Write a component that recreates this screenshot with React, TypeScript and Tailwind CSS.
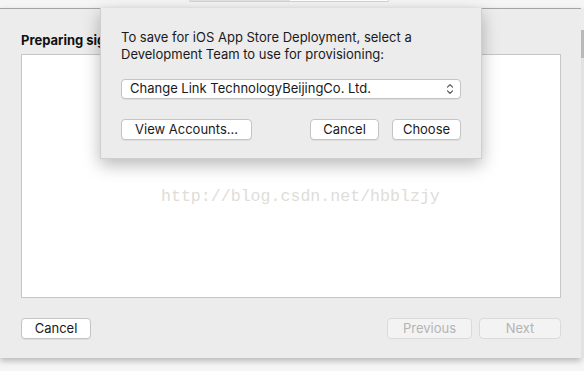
import React from 'react'

const sans = { fontFamily: 'Inter, "Liberation Sans", Arial, sans-serif' }

function MacButton({ label, width, disabled }: { label: string; width: string; disabled?: boolean }) {
  return (
    <button
      className={
        'h-[21px] rounded-[4px] border text-[13px] leading-none ' +
        width +
        (disabled
          ? ' border-[#dadada] bg-[#f3f3f3] text-[#b3b3b3]'
          : ' border-[#c4c4c4] bg-white text-[#1a1a1a] shadow-[0_1px_0_rgba(0,0,0,0.06)]')
      }
    >
      {label}
    </button>
  )
}

function Chevrons() {
  return (
    <svg width="8" height="12" viewBox="0 0 8 12" fill="none" stroke="#4a4a4a" strokeWidth="1.1" strokeLinecap="round" strokeLinejoin="round">
      <path d="M1.5 4.2 L4 1.7 L6.5 4.2" />
      <path d="M1.5 7.8 L4 10.3 L6.5 7.8" />
    </svg>
  )
}

export default function App() {
  return (
    <div className="relative w-[584px] h-[371px] overflow-hidden bg-[#f5f5f5]" style={sans}>
      {/* top strip with segmented control edge */}
      <div className="h-[8px] flex">
        <div className="ml-[189px] w-[200px] h-[2px] flex rounded-b-[3px] border-x border-b border-[#d3d3d3]">
          <div className="w-[100px] bg-[#e2e2e2]" />
          <div className="flex-1 bg-white" />
        </div>
      </div>

      <div className="flex">
        {/* main window */}
        <div className="w-[581px] h-[350px] flex flex-col border-t border-[#a5a5a5] bg-[#ececec] shadow-[0_3px_6px_rgba(0,0,0,0.25)] pl-[21px] pr-[20px]">
          {/* title is partly hidden behind the sheet */}
          <div className="pt-[22px] h-[45px] w-[79px] overflow-hidden whitespace-nowrap text-[13px] font-bold text-[#111]">
            Preparing signing identities…
          </div>
          <div className="h-[244px] bg-white border border-[#c6c6c6] pt-[128px] pl-[139px]">
            <span className="text-[16.6px] text-[#e0ddd8]" style={{ fontFamily: '"Liberation Mono", "Courier New", monospace' }}>
              http://blog.csdn.net/hbblzjy
            </span>
          </div>
          <div className="mt-[20px] flex items-center">
            <MacButton label="Cancel" width="w-[70px]" />
            <div className="flex-1" />
            <MacButton label="Previous" width="w-[85px]" disabled />
            <div className="w-[7px]" />
            <MacButton label="Next" width="w-[82px]" disabled />
          </div>
        </div>
        {/* background scrollbar sliver */}
        <div className="w-[3px] flex flex-col">
          <div className="h-[22px] bg-[#ededed]" />
          <div className="h-[28px] bg-[#b9b9b9]" />
          <div className="flex-1 bg-[#e2e2e2]" />
        </div>
      </div>

      {/* sheet dialog */}
      <div className="absolute left-[100px] top-[8px] w-[382px] h-[151px] bg-[#ececec] border-x border-b border-[#cfcfcf] shadow-[0_6px_16px_rgba(0,0,0,0.28)] px-[20px]">
        <div className="pt-[21px] text-[13px] leading-[17px] text-[#1a1a1a]">
          To save for iOS App Store Deployment, select a<br />
          Development Team to use for provisioning:
        </div>
        <div className="mt-[16px] h-[20px] w-[340px] flex items-center rounded-[4px] border border-[#c4c4c4] bg-white pl-[8px] pr-[6px] shadow-[0_1px_0_rgba(0,0,0,0.06)]">
          <span className="flex-1 text-[13px] text-[#1a1a1a]">Change Link TechnologyBeijingCo. Ltd.</span>
          <Chevrons />
        </div>
        <div className="mt-[20px] flex items-center">
          <MacButton label="View Accounts…" width="w-[131px]" />
          <div className="flex-1" />
          <MacButton label="Cancel" width="w-[69px]" />
          <div className="w-[13px]" />
          <MacButton label="Choose" width="w-[69px]" />
        </div>
      </div>
    </div>
  )
}
